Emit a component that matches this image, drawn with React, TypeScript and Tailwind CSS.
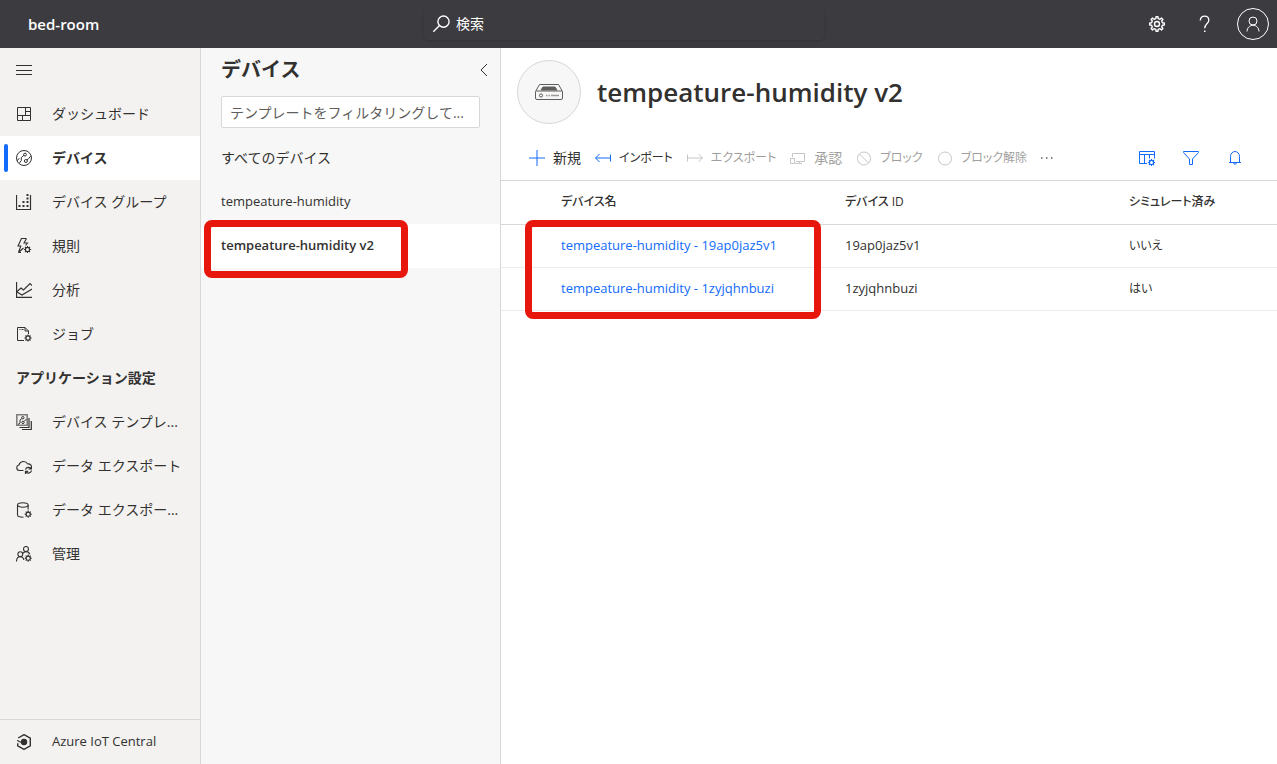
import React from "react";

type IconProps = { className?: string };

const Svg = ({
  className = "size-4",
  box = 16,
  children,
}: IconProps & { box?: number; children: React.ReactNode }) => (
  <svg
    className={`shrink-0 ${className}`}
    viewBox={`0 0 ${box} ${box}`}
    fill="none"
    stroke="currentColor"
    strokeWidth={1}
    aria-hidden="true"
  >
    {children}
  </svg>
);

// small cog used as a badge in the lower right corner of other icons
const MiniGear = ({ x = 12, y = 12 }: { x?: number; y?: number }) => (
  <g transform={`translate(${x} ${y})`}>
    <circle r="2.1" strokeWidth={1.2} />
    <path
      d="M0-2v-1.6M0 2v1.6M-2 0h-1.6M2 0h1.6M-1.5-1.5l-1-1M1.5 1.5l1 1M-1.5 1.5l-1 1M1.5-1.5l1-1"
      strokeWidth={1.1}
    />
  </g>
);

const MenuIcon = () => (
  <Svg>
    <path d="M0 3.5h16M0 8.5h16M0 12.5h16" />
  </Svg>
);

const DashboardIcon = () => (
  <Svg>
    <path d="M1.5 1.5h13v13h-13zM9.5 1.5v8M1.5 9.5h13M9.5 5.5h5M6.5 9.5v5" />
  </Svg>
);

const DevicesIcon = () => (
  <Svg>
    <circle cx="8" cy="8" r="7.5" />
    <circle cx="9" cy="4.6" r="1.4" />
    <circle cx="9.9" cy="11" r="1.5" />
    <path d="M7.8 5.4 5.3 7.6v3L3.4 13M1.2 10.8l2-2.6M11 9.8l1.4-1 2.4-2.8" />
  </Svg>
);

const GroupsIcon = () => (
  <Svg>
    <path d="M.5 1v14.5h14V1" strokeWidth={1.2} />
    <path
      d="M2.5 12h2M6.5 12h2M10.5 12h2M6.5 8h2M10.5 8h2M10.5 4.5h2M10.5 1h2"
      strokeWidth={2}
    />
  </Svg>
);

const RulesIcon = () => (
  <Svg>
    <path
      d="M10.5.5h-5L2 8h2.8L2.5 14.5l5-4.5M10.5.5 8 5h3.5L9.5 7.5M2.5 14.5H5"
      strokeWidth={1.1}
    />
    <MiniGear x={11.5} y={11.5} />
  </Svg>
);

const AnalyticsIcon = () => (
  <Svg>
    <path d="M.5 0v15.5H16" strokeWidth={1.3} />
    <path d="M1 9.5 5 6l2.5 2L14 1.500l2 2M1 10l5 3 10-6" strokeWidth={1.1} />
  </Svg>
);

const JobsIcon = () => (
  <Svg>
    <path d="M8 14.5H1.5v-13H9l3.5 3.5v3M9 1.5v3.5h3.5" />
    <path d="M3.5 3.5h1M5.5 3.5h2" />
    <MiniGear x={12} y={12} />
  </Svg>
);

const TemplatesIcon = () => (
  <Svg>
    <path d="M.8.8h10.4v10.4H.8z" strokeWidth={1.6} opacity=".6" />
    <path d="M13 4v9.5H3.5M15.3 7v8.5H6" strokeWidth={1.2} />
    <circle cx="6.8" cy="3.7" r="1.2" />
    <circle cx="7" cy="8.4" r="1.2" />
    <path d="M5.8 4.5 4 6v3l-2 1.5M8 7.5 10.5 5" />
  </Svg>
);

const CloudSyncIcon = () => (
  <Svg>
    <path
      d="M7.5 12.5H3.2a2.8 2.8 0 0 1-.3-5.5 4.8 4.8 0 0 1 8.8-1 3.5 3.5 0 0 1 3.8 2"
      strokeWidth={1.1}
    />
    <path
      d="M9.5 11.5a3.2 3.2 0 0 1 5.5-1M15.5 8v3h-3M15.5 12.5a3.2 3.2 0 0 1-5.5 1.5M9.5 16v-2.7h2.7"
      strokeWidth={1.2}
    />
  </Svg>
);

const DatabaseIcon = () => (
  <Svg>
    <ellipse cx="6.8" cy="3" rx="5.3" ry="2.2" strokeWidth={1.1} />
    <path d="M1.5 3v10c0 1.2 2.4 2.2 6 2.2M12.1 3v4.5" strokeWidth={1.1} />
    <MiniGear x={12.2} y={12.2} />
  </Svg>
);

const AdminIcon = () => (
  <Svg>
    <g strokeWidth={1.1}>
      <circle cx="10" cy="3" r="2.5" />
      <circle cx="4.3" cy="8.2" r="2.4" />
      <path d="M.5 15.5c0-3 1.6-4.8 3.8-4.8 2 0 3.2 1.3 3.5 3.3M6.7 7.3c1-1.2 2-1.7 3.3-1.7 1.8 0 3.2 1 3.8 2.6" />
    </g>
    <MiniGear x={12.2} y={12.2} />
  </Svg>
);

const CentralIcon = () => (
  <Svg>
    <path d="M1.7 9.3v2.5L8 15.4l6.3-3.6V4.2L8 .6 2.2 4" strokeWidth={1.4} />
    <path d="M1.2 6.2 3.8 8H5" strokeWidth={1.2} />
    <circle cx="8" cy="8" r="2.9" fill="currentColor" />
  </Svg>
);

const SearchIcon = () => (
  <Svg className="size-[18px]" box={18}>
    <circle cx="11.5" cy="6.6" r="5.6" strokeWidth={1.4} />
    <path d="M7.5 10.6 1.3 16.8" strokeWidth={1.4} />
  </Svg>
);

const GearIcon = () => (
  <Svg>
    <path
      strokeWidth={1.4}
      strokeLinejoin="round"
      d="M6.8 2.6 7 .7h2l.2 1.9 1.8.7 1.5-1.2L13.9 3.5 12.7 5l.7 1.8 1.9.2v2l-1.9.2-.7 1.8 1.2 1.5-1.4 1.4-1.5-1.2-1.8.7L9 15.3H7l-.2-1.9-1.8-.7-1.5 1.2-1.4-1.4L3.3 11l-.7-1.8L.7 9V7l1.9-.2L3.3 5 2.1 3.5l1.4-1.4L5 3.3z"
    />
    <circle cx="8" cy="8" r="2.5" strokeWidth={1.4} />
  </Svg>
);

const HelpIcon = () => (
  <Svg className="size-[18px]" box={18}>
    <path
      d="M4.3 5.5C4.3 2.8 6.1 1.2 8.5 1.2s4.3 1.5 4.3 4c0 3.4-4.1 3.8-4.1 8"
      strokeWidth={1.3}
    />
    <path d="M8 16.3h1.5" strokeWidth={1.5} />
  </Svg>
);

const UserIcon = () => (
  <Svg>
    <circle cx="8" cy="5" r="4" />
    <path d="M2 15.5C2.2 11.5 4.8 9.3 8 9.3s5.8 2.2 6 6.2" />
  </Svg>
);

const CollapseIcon = () => (
  <Svg className="size-3" box={12}>
    <path d="M9 0 3 6l6 6" />
  </Svg>
);

const DeviceBoxIcon = () => (
  <svg
    className="h-5 w-7 text-[#605e5c]"
    viewBox="0 0 28 20"
    fill="none"
    stroke="currentColor"
    aria-hidden="true"
  >
    <path d="M.5 9.5 4.5 2.5h19l4 7V16a1.5 1.5 0 0 1-1.5 1.5H2A1.5 1.5 0 0 1 .5 16z" />
    <path d="M1 9h26" />
    <path d="M8 5h12l2 3H6z" fill="currentColor" />
    <circle cx="6" cy="13.5" r="1.6" />
    <path d="M11 13.5h1.5M13.5 13.5H15M16 13.5h8" strokeWidth={1.6} opacity=".6" />
  </svg>
);

const AddIcon = () => (
  <Svg>
    <path d="M8 0v16M0 8h16" />
  </Svg>
);

const ImportIcon = () => (
  <Svg>
    <path d="M.5 8H15M4.5 4 .5 8l4 4M15.5 4.5v7" />
  </Svg>
);

const ExportIcon = () => (
  <Svg>
    <path d="M1 8h14.5M11.5 4l4 4-4 4M.5 4.5v7" />
  </Svg>
);

const ApproveIcon = () => (
  <Svg>
    <path d="M2.5 7V3.5h12v8H6M.5 8.5h4v5h-4zM9.5 11.5v2M5 13.5h7" />
  </Svg>
);

const BlockIcon = () => (
  <Svg>
    <circle cx="8" cy="8.5" r="6.5" />
    <path d="m3.5 4 9 9" />
  </Svg>
);

const CircleIcon = () => (
  <Svg>
    <circle cx="8" cy="8.5" r="6.5" />
  </Svg>
);

const ColumnsIcon = () => (
  <Svg>
    <path d="M8 13.5H.5v-12h15v7M.5 4.5h15M5.5 4.5v9M10.5 4.5v4" />
    <MiniGear x={12.5} y={12.5} />
  </Svg>
);

const FilterIcon = () => (
  <Svg>
    <path d="M.5 1.5h15v1L9.5 9v5.5h-3V9L.5 2.5z" />
  </Svg>
);

const BellIcon = () => (
  <Svg>
    <path d="M3.5 12.5v-6a4.5 5 0 0 1 9 0v6M2 12.5h12M6.5 12.5a1.5 1.7 0 0 0 3 0" />
  </Svg>
);

const mainLinks = [
  { label: "ダッシュボード", icon: <DashboardIcon /> },
  { label: "デバイス", icon: <DevicesIcon />, active: true },
  { label: "デバイス グループ", icon: <GroupsIcon /> },
  { label: "規則", icon: <RulesIcon /> },
  { label: "分析", icon: <AnalyticsIcon /> },
  { label: "ジョブ", icon: <JobsIcon /> },
];

const settingLinks = [
  { label: "デバイス テンプレ...", icon: <TemplatesIcon /> },
  { label: "データ エクスポート", icon: <CloudSyncIcon /> },
  { label: "データ エクスポー...", icon: <DatabaseIcon /> },
  { label: "管理", icon: <AdminIcon /> },
];

// kana labels are set a size smaller than the kanji ones
const commands = [
  { label: "新規", icon: <AddIcon />, enabled: true, size: "text-sm" },
  { label: "インポート", icon: <ImportIcon />, enabled: true, size: "text-xs" },
  { label: "エクスポート", icon: <ExportIcon />, enabled: false, size: "text-xs" },
  { label: "承認", icon: <ApproveIcon />, enabled: false, size: "text-sm" },
  { label: "ブロック", icon: <BlockIcon />, enabled: false, size: "text-xs" },
  { label: "ブロック解除", icon: <CircleIcon />, enabled: false, size: "text-xs" },
];

const devices = [
  { name: "tempeature-humidity - 19ap0jaz5v1", id: "19ap0jaz5v1", simulated: "いいえ" },
  { name: "tempeature-humidity - 1zyjqhnbuzi", id: "1zyjqhnbuzi", simulated: "はい" },
];

type NavLinkProps = { label: string; icon: React.ReactNode; active?: boolean };

const NavLink: React.FC<NavLinkProps> = ({ label, icon, active }) => (
  <li>
    <a
      href="#"
      className={`relative flex h-11 items-center gap-5 pl-4 text-sm ${
        active ? "bg-white font-semibold" : ""
      }`}
    >
      {active && (
        <span className="absolute top-2 left-1 h-7 w-1 rounded-sm bg-[#136bfb]" />
      )}
      {icon}
      <span className="whitespace-nowrap">{label}</span>
    </a>
  </li>
);

const TopBar = () => (
  <header className="flex h-12 shrink-0 items-center bg-[#3c3b40] text-white">
    <div className="w-[424px] shrink-0 pl-7 text-[15px] font-semibold">
      bed-room
    </div>
    <label className="flex h-8 w-[400px] items-center gap-0.5 rounded-sm px-2 shadow-sm">
      <SearchIcon />
      <input
        type="search"
        aria-label="検索"
        placeholder="検索"
        className="w-full bg-transparent px-1 text-sm outline-none placeholder:text-white"
      />
    </label>
    <div className="ml-auto flex">
      <button className="flex size-12 items-center justify-center" aria-label="設定">
        <GearIcon />
      </button>
      <button className="flex size-12 items-center justify-center" aria-label="ヘルプ">
        <HelpIcon />
      </button>
      <button className="flex size-12 items-center justify-center" aria-label="アカウント">
        <span className="flex size-8 items-center justify-center rounded-full border border-white">
          <UserIcon />
        </span>
      </button>
    </div>
  </header>
);

const SideNav = () => (
  <nav className="flex w-[201px] shrink-0 flex-col border-r border-[#d8d7d6] bg-[#f3f2f1]">
    <button className="flex h-11 items-center pl-4" aria-label="メニュー">
      <MenuIcon />
    </button>
    <ul>
      {mainLinks.map((l) => (
        <NavLink key={l.label} {...l} />
      ))}
    </ul>
    <h2 className="flex h-11 items-center pl-4 text-sm font-semibold">
      アプリケーション設定
    </h2>
    <ul>
      {settingLinks.map((l) => (
        <NavLink key={l.label} {...l} />
      ))}
    </ul>
    <a
      href="#"
      className="mt-auto flex h-[45px] items-center gap-5 border-t border-[#d8d7d6] pl-4 text-[13px]"
    >
      <CentralIcon />
      Azure IoT Central
    </a>
  </nav>
);

const TemplatePanel = () => (
  <aside className="w-[300px] shrink-0 border-r border-[#d8d7d6] bg-[#f7f7f7]">
    <div className="flex h-11 items-center justify-between pr-[10px] pl-5">
      <h2 className="text-xl font-semibold">デバイス</h2>
      <button aria-label="折りたたむ">
        <CollapseIcon />
      </button>
    </div>
    <div className="px-5 pt-1 pb-2">
      <input
        type="text"
        aria-label="テンプレートのフィルター"
        placeholder="テンプレートをフィルタリングして..."
        className="h-8 w-full rounded-xs border border-[#d8d7d6] bg-white px-2 text-sm outline-none placeholder:text-[#605e5c]"
      />
    </div>
    <ul>
      <li>
        <a href="#" className="flex h-11 items-center pl-5 text-sm">
          すべてのデバイス
        </a>
      </li>
      <li>
        <a href="#" className="flex h-11 items-center pl-5 text-[13px]">
          tempeature-humidity
        </a>
      </li>
      <li className="relative">
        <a
          href="#"
          className="flex h-11 items-center bg-white pl-5 text-[13px] font-semibold"
        >
          tempeature-humidity v2
        </a>
        <span className="pointer-events-none absolute -top-1 left-[3px] h-[58px] w-51 rounded-lg border-7 border-[#e8170d]" />
      </li>
    </ul>
  </aside>
);

const CommandBar = () => (
  <div className="flex h-[45px] items-center border-b border-[#d8d7d6] pr-5 pl-7">
    <div className="flex items-center gap-3.5 [font-feature-settings:'palt']">
      {commands.map((c) => (
        <button
          key={c.label}
          disabled={!c.enabled}
          className={`flex items-center gap-2 whitespace-nowrap disabled:text-[#a19f9d] ${c.size}`}
        >
          <span className={c.enabled ? "text-[#136bfb]" : "text-[#c8c6c4]"}>
            {c.icon}
          </span>
          {c.label}
        </button>
      ))}
      <button aria-label="その他" className="text-[#605e5c]">
        <Svg className="size-3" box={12}>
          <path d="M0 6h1.5M5 6h1.5M10 6h1.5" strokeWidth={1.5} />
        </Svg>
      </button>
    </div>
    <div className="ml-auto flex text-[#136bfb]">
      <button className="flex size-11 items-center justify-center" aria-label="列のオプション">
        <ColumnsIcon />
      </button>
      <button className="flex size-11 items-center justify-center" aria-label="フィルター">
        <FilterIcon />
      </button>
      <button className="flex size-11 items-center justify-center" aria-label="通知">
        <BellIcon />
      </button>
    </div>
  </div>
);

const DeviceTable = () => (
  <div className="relative">
    <table className="w-full table-fixed text-left text-[13px]">
      <thead className="text-xs [font-feature-settings:'palt']">
        <tr className="h-[43px] border-b border-[#d8d7d6]">
          <th className="w-[344px] pl-[60px] font-medium">デバイス名</th>
          <th className="w-[284px] font-medium">デバイス ID</th>
          <th className="font-medium">シミュレート済み</th>
        </tr>
      </thead>
      <tbody>
        {devices.map((d) => (
          <tr key={d.id} className="h-[43px] border-b border-[#edebe9]">
            <td className="pl-[60px]">
              <a href="#" className="text-[#136bfb]">
                {d.name}
              </a>
            </td>
            <td>{d.id}</td>
            <td className="text-xs [font-feature-settings:'palt']">{d.simulated}</td>
          </tr>
        ))}
      </tbody>
    </table>
    <span className="pointer-events-none absolute top-[39px] left-6 h-[99px] w-74 rounded-lg border-7 border-[#e8170d]" />
  </div>
);

const App: React.FC = () => {
  return (
    <div className="flex h-screen flex-col bg-white font-['Open_Sans','Noto_Sans_CJK_JP',sans-serif] text-[#323130]">
      <TopBar />
      <div className="flex min-h-0 flex-1">
        <SideNav />
        <TemplatePanel />
        <main className="min-w-0 flex-1">
          <div className="flex items-center gap-4 px-4 py-3">
            <div className="flex size-16 shrink-0 items-center justify-center rounded-full border border-[#d8d7d6] bg-[#f7f7f7]">
              <DeviceBoxIcon />
            </div>
            <h1 className="text-[26px] font-semibold">tempeature-humidity v2</h1>
          </div>
          <CommandBar />
          <DeviceTable />
        </main>
      </div>
    </div>
  );
};

export default App;
